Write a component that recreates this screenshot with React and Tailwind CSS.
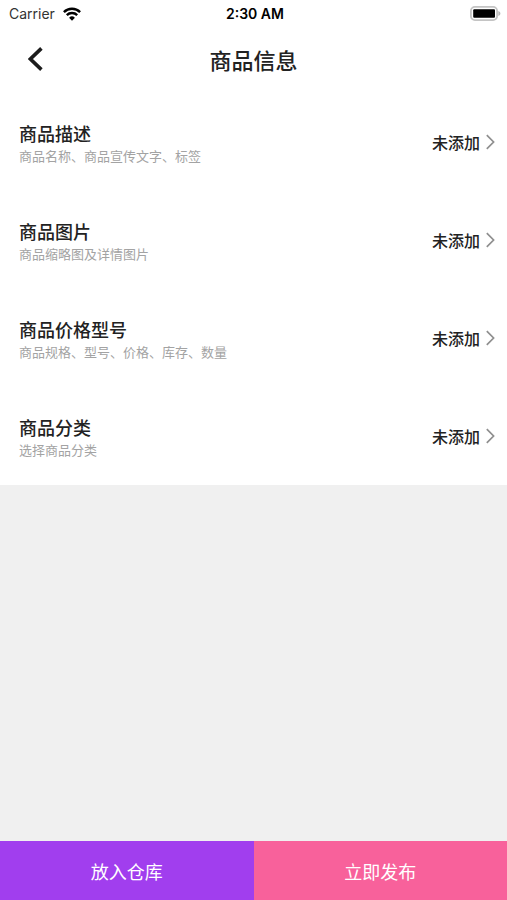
import React from 'react';

const sections = [
  { id: 'description', title: '商品描述', hint: '商品名称、商品宣传文字、标签', status: '未添加' },
  { id: 'images', title: '商品图片', hint: '商品缩略图及详情图片', status: '未添加' },
  { id: 'pricing', title: '商品价格型号', hint: '商品规格、型号、价格、库存、数量', status: '未添加' },
  { id: 'category', title: '商品分类', hint: '选择商品分类', status: '未添加' },
];

const WifiIcon = () => (
  <svg width="18" height="14" viewBox="0 0 18 14" fill="none" stroke="#000" strokeWidth="2.4" aria-hidden="true">
    <path d="M0.9 5.1a11.5 11.5 0 0 1 16.2 0" />
    <path d="M3.8 8.2a7.4 7.4 0 0 1 10.4 0" />
    <path d="M9 13.8 6.1 10.8a4.1 4.1 0 0 1 5.8 0z" fill="#000" stroke="none" />
  </svg>
);

const BatteryIcon = () => (
  <svg width="31" height="15" viewBox="0 0 31 15" aria-hidden="true">
    <rect x="0.9" y="0.9" width="26.2" height="13.2" rx="4" fill="#fff" stroke="#c4c4c4" strokeWidth="1.8" />
    <rect x="3.2" y="3.2" width="21.8" height="8.6" rx="1" fill="#000" />
    <path d="M28.3 5c2.8 1 2.8 4 0 5z" fill="#b8b8b8" />
  </svg>
);

const StatusBar = () => (
  <div className="grid grid-cols-3 items-center h-7 pl-[9px] pr-1.5 text-sm text-black font-['Inter',sans-serif]">
    <div className="flex items-center gap-2 text-[#333]">
      <span>Carrier</span>
      <WifiIcon />
    </div>
    <span className="text-center font-semibold">2:30 AM</span>
    <div className="flex justify-end pb-0.5">
      <BatteryIcon />
    </div>
  </div>
);

const NavBar = () => (
  <header className="grid grid-cols-[64px_1fr_64px] items-center h-[62px]">
    <button type="button" aria-label="返回" className="flex items-center h-full pl-7">
      <svg width="16" height="24" viewBox="0 0 16 24" fill="none" stroke="#1c1c1c" strokeWidth="3.6" aria-hidden="true">
        <path d="M13.4 1.4 2.4 12l11 10.6" />
      </svg>
    </button>
    <h1 className="text-center text-[22px] font-medium text-[#222]">商品信息</h1>
  </header>
);

const SectionRow = ({ title, hint, status }) => (
  <li>
    <button type="button" className="flex items-center justify-between w-full h-[98px] pl-[19px] pr-3 text-left">
      <span className="flex flex-col pt-1">
        <span className="text-lg leading-6 font-medium text-[#222]">{title}</span>
        <span className="text-[13px] leading-[22px] text-[#a3a3a3]">{hint}</span>
      </span>
      <span className="flex items-center gap-1.5 text-base font-medium text-[#222]">
        {status}
        <svg width="9" height="16" viewBox="0 0 9 16" fill="none" stroke="#8f8f8f" strokeWidth="1.7" aria-hidden="true">
          <path d="M0.8 1.2 7.6 8 0.8 14.8" />
        </svg>
      </span>
    </button>
  </li>
);

const App = () => {
  return (
    <div className="flex flex-col min-h-screen bg-[#f0f0f0] font-['Noto_Sans_CJK_SC',sans-serif]">
      <div className="bg-white">
        <StatusBar />
        <NavBar />
        <ul className="pt-[3px]">
          {sections.map((section) => (
            <SectionRow key={section.id} title={section.title} hint={section.hint} status={section.status} />
          ))}
        </ul>
      </div>

      {/* Bottom actions */}
      <footer className="grid grid-cols-2 h-[59px] mt-auto text-lg text-white">
        <button type="button" className="bg-[#a13eee]">放入仓库</button>
        <button type="button" className="bg-[#f8619b]">立即发布</button>
      </footer>
    </div>
  );
};

export default App;
